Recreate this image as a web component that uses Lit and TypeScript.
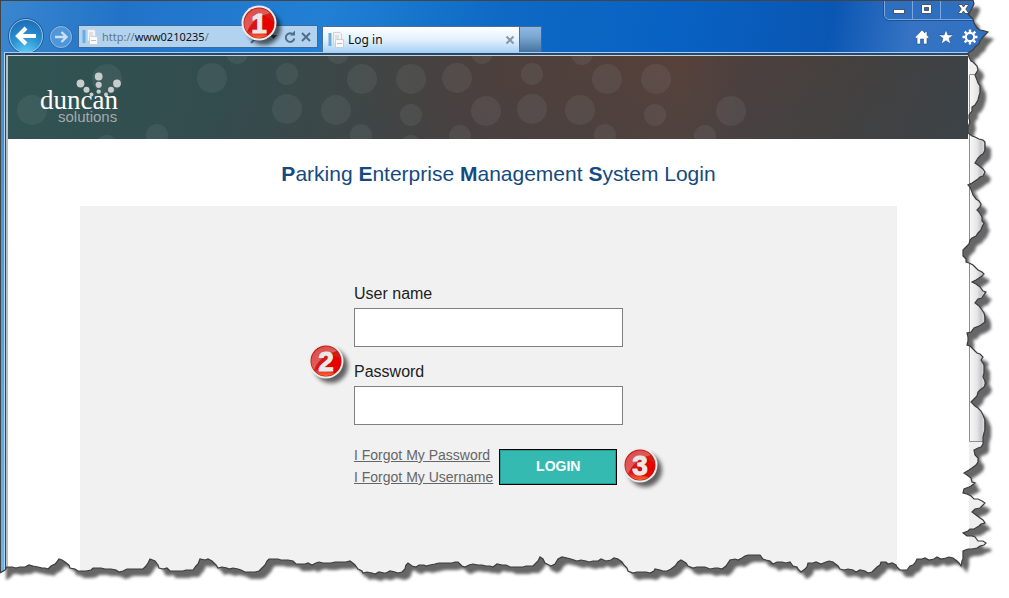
import { LitElement, html, css, svg } from "lit";
import { customElement, property } from "lit/decorators.js";

type Point = [number, number];

const RIGHT_EDGE: Point[] = [
  [973, 0], [974, 4], [972, 8], [968, 14], [971, 17], [974, 23], [980, 30], [988, 32], [983, 37], [975, 47],
  [968, 53], [969, 57], [973, 62], [978, 70], [975, 75], [978, 83], [980, 93], [978, 100], [972, 107], [969, 115],
  [968, 133], [975, 137], [985, 142], [985, 150], [978, 158], [975, 163], [985, 172], [980, 177], [968, 185],
  [973, 195], [981, 204], [977, 210], [984, 223], [978, 233], [972, 238], [963, 250], [963, 256], [966, 262],
  [975, 267], [984, 274], [972, 282], [986, 292], [975, 303], [984, 313], [985, 322], [967, 333], [967, 345],
  [983, 357], [981, 360], [984, 365], [983, 377], [986, 383], [980, 390], [971, 402], [978, 408], [982, 413],
  [985, 423], [983, 437], [981, 447], [974, 450], [978, 462], [964, 473], [975, 483], [964, 489], [963, 493],
  [985, 503], [972, 512], [985, 523], [963, 533], [986, 543], [972, 549], [963, 551], [961, 566],
];

const BOTTOM_EDGE: Point[] = [
  [953, 558], [917, 559], [907, 570], [900, 570], [892, 563], [881, 562], [877, 567], [872, 572], [840, 569],
  [833, 562], [808, 563], [805, 569], [801, 572], [790, 562], [777, 562], [773, 564], [766, 560], [760, 555],
  [748, 555], [742, 558], [730, 560], [722, 569], [697, 567], [688, 566], [681, 560], [667, 571], [655, 569],
  [650, 573], [637, 572], [628, 571], [618, 559], [593, 561], [577, 561], [562, 557], [558, 559], [551, 566],
  [545, 563], [540, 557], [533, 566], [510, 567], [497, 564], [493, 567], [473, 564], [465, 567], [458, 562],
  [443, 563], [430, 565], [412, 566], [408, 563], [402, 572], [363, 573], [358, 569], [350, 561], [337, 562],
  [323, 563], [300, 564], [288, 560], [269, 559], [262, 568], [255, 572], [245, 572], [233, 568], [218, 568],
  [212, 561], [200, 559], [193, 570], [170, 571], [167, 568], [159, 568], [155, 561], [150, 559], [143, 569],
  [127, 569], [123, 571], [107, 569], [97, 568], [82, 571], [70, 568], [65, 562], [59, 559], [48, 569],
  [33, 566], [20, 567], [7, 567], [0, 573],
];

/** Splits long strokes of the tear into short steps that wander by a pixel. */
function roughen(points: Point[]): Point[] {
  const out: Point[] = [points[0]];
  for (let i = 1; i < points.length; i++) {
    const [ax, ay] = points[i - 1];
    const [bx, by] = points[i];
    const steps = Math.max(1, Math.round(Math.hypot(bx - ax, by - ay) / 4));
    for (let s = 1; s < steps; s++) {
      const n = (i * 7 + s * 5 + i * s) % 3;
      out.push([
        Math.round(ax + ((bx - ax) * s) / steps) + (n === 1 ? 1 : 0),
        Math.round(ay + ((by - ay) * s) / steps) + (n === 2 ? 1 : n === 0 ? -1 : 0),
      ]);
    }
    out.push([bx, by]);
  }
  return out;
}

const EDGE = roughen([...RIGHT_EDGE, ...BOTTOM_EDGE]).map((p) => p.join(" ")).join("L");
const PAPER = `M0 0L${EDGE}Z`;
const OUTSIDE = `M-1 -1H1010V599H-1ZM-1 -2L${EDGE}L-1 573Z`;

const DOTS: [number, number, number][] = [
  [107, 79, 15], [32, 110, 15], [157, 135, 11], [107, 146, 11], [237, 53, 11], [212, 78, 15], [287, 74, 11],
  [287, 109, 15], [336, 110, 15], [338, 53, 11], [362, 79, 15], [411, 79, 15], [457, 78, 15], [532, 74, 11],
  [607, 79, 15], [656, 79, 15], [482, 53, 11], [582, 54, 11], [411, 115, 11], [486, 111, 15], [532, 109, 15],
  [580, 110, 15], [655, 115, 11], [361, 135, 11], [411, 146, 11], [460, 136, 11], [605, 135, 11],
  [731, 111, 15], [705, 136, 11],
];

const LOGO_DOTS: [number, number, number][] = [
  [80.5, 83.5, 3.9], [98.7, 76.5, 3.9], [117, 83.5, 3.9], [98.7, 84.8, 3.1], [86.5, 89.8, 3], [111, 89.8, 3],
  [98.7, 91.6, 2.2], [91.5, 94.4, 2], [106, 94.4, 2],
];

const pageIcon = html`<svg class="page-icon" width="16" height="16" viewBox="0 0 16 16" aria-hidden="true">
  <rect x="0.5" y="1" width="3" height="13" fill="#6aaede" />
  <path d="M5.500 .5H12L13.500 2V12H5.500Z" fill="#f4f4f4" stroke="#cfd3d7" />
  <path d="M7 4H11M7 6H11M7 8H8" stroke="#c9ced3" />
  <path d="M8.500 7.500H15.500V15.500H7.500V8.500Z" fill="#fafafa" stroke="#cbd0d5" />
  <path d="M9 11.500H14" stroke="#b9bec4" />
</svg>`;

@customElement("step-badge")
export class StepBadge extends LitElement {
  @property() step = "1";

  static styles = css`
    :host { display: block; width: 44px; height: 44px; pointer-events: none; }
    svg { display: block; overflow: visible; }
    text { font: bold 28px "Liberation Sans", Arial, sans-serif; }
  `;

  render() {
    return html`<svg width="44" height="44" viewBox="0 0 44 44" role="img" aria-label="Step ${this.step}">
      <defs>
        <linearGradient id="red" x1="0" y1="0" x2="0" y2="1">
          <stop offset="0" stop-color="#cf1f1c" /><stop offset="0.75" stop-color="#d81510" />
          <stop offset="1" stop-color="#ff6a35" />
        </linearGradient>
        <linearGradient id="gloss" x1="0" y1="0" x2="0.6" y2="1">
          <stop offset="0" stop-color="#fff" stop-opacity="0.2" /><stop offset="1" stop-color="#fff" stop-opacity="0.34" />
        </linearGradient>
        <filter id="soft" x="-30%" y="-30%" width="170%" height="170%"><feGaussianBlur stdDeviation="2" /></filter>
      </defs>
      <circle cx="23" cy="23" r="17" fill="#000" opacity="0.6" filter="url(#soft)" />
      <circle cx="18" cy="18" r="17.500" fill="#eceeee" />
      <circle cx="18" cy="18" r="15.500" fill="#b3201c" />
      <circle cx="18" cy="18" r="15" fill="url(#red)" />
      <path d="M3.500 21A15 15 0 0 1 29 8Q12 12 6 27A15 15 0 0 1 3.500 21Z" fill="url(#gloss)" />
      <path d="M22 10L33 17A15 15 0 0 1 27 30L14 27Z" fill="#e60000" />
      <text x="18" y="28" text-anchor="middle" fill="#e9e9e9" stroke="#e9e9e9" stroke-width="1">${this.step}</text>
    </svg>`;
  }
}

@customElement("browser-chrome")
export class BrowserChrome extends LitElement {
  static styles = css`
    :host {
      display: block; position: relative; overflow: hidden; height: 52px; box-sizing: border-box;
      border-top: 1px solid #444; border-left: 1px solid #444;
      background: linear-gradient(100deg, #3a87cf 0%, #2273c8 12%, #2180d4 32%, #0d69c4 50%, #0862c3 66%, #0a56b3 82%, #3673c3 90%, #2f6fc0 100%);
      font: 12px/20px "Noto Sans", "Open Sans", sans-serif; color: #111;
    }
    button { padding: 0; margin: 0; border: 0; background: none; color: inherit; font: inherit; display: block; }
    svg { display: block; }
    .title { display: flex; justify-content: flex-end; height: 19px; }
    .controls {
      display: flex; box-sizing: border-box; width: 125px; height: 19px; border: 1px solid #79a9dc; border-top: 0;
      border-radius: 0 0 0 5px; outline: 1px solid #1e5197; background: #2f6fbf;
    }
    .controls button { width: 28px; border-right: 1px solid #79a9dc; box-sizing: border-box; }
    .controls .close { width: 45px; border: 0; }
    .nav { display: flex; align-items: flex-end; height: 32px; padding: 0 31px 0 7px; }
    .back { flex: none; height: 36px; margin-bottom: -2px; }
    .forward { flex: none; height: 24px; margin: 0 5px 3px; }
    .address {
      flex: 0 1 240px; min-width: 0; box-sizing: border-box; height: 23px; margin-bottom: 4px; padding: 0 3px;
      display: flex; align-items: center; gap: 4px; border: 1px solid #3f6b98; background: #b2d3f0;
    }
    .url { position: relative; flex: 1; min-width: 0; height: 20px; font-size: 11px; }
    .url input {
      width: 100%; height: 20px; padding: 0; border: 0; outline: 0; background: none; color: transparent; font: inherit;
      display: block;
    }
    .shown { position: absolute; inset: 0; color: #667684; pointer-events: none; }
    .shown b { font-weight: 400; color: #111; }
    .page-icon { flex: none; }
    .tab {
      flex: 0 1 198px; min-width: 0; box-sizing: border-box; height: 26px; margin-left: 4px; padding: 0 4px 0 5px;
      display: flex; align-items: center; gap: 4px; border: 1px solid #4b6f95; border-bottom: 0;
      background: linear-gradient(#fff, #e3f1fd 50%, #a9d2f6);
    }
    .tab span { flex: 1; }
    .new-tab {
      flex: none; width: 22px; height: 26px; border: 1px solid #46688c; border-left: 0; border-bottom: 0;
      box-sizing: border-box; background: linear-gradient(#8db8e4, #7aa7d2 40%, #44739f);
    }
    .tools { display: flex; gap: 8px; margin: 0 0 7px auto; }
    step-badge { position: absolute; left: 240px; top: 4px; }
  `;

  render() {
    return html`
      <div class="title">
        <div class="controls">
          <button aria-label="Minimize"><svg width="27" height="18" viewBox="0 0 27 18"><rect x="8.500" y="8.500" width="11" height="4" fill="#fff" stroke="#4b5566" /></svg></button>
          <button aria-label="Maximize"><svg width="27" height="18" viewBox="0 0 27 18"><path d="M8.500 3.500H18.500V12.500H8.500ZM11.500 6.500V9.500H15.500V6.500Z" fill="#fff" fill-rule="evenodd" stroke="#4b5566" /></svg></button>
          <button class="close" aria-label="Close"><svg width="45" height="18" viewBox="0 0 45 18"><path d="M17 3.500H21L22.500 6L24 3.500H28L24.800 8L28 12.500H24L22.500 10L21 12.500H17L20.200 8Z" fill="#fff" stroke="#4b5566" /></svg></button>
        </div>
      </div>
      <div class="nav">
        <button class="back" aria-label="Back">
          <svg width="36" height="36" viewBox="0 0 36 36">
            <defs><radialGradient id="b" cx="0.5" cy="1" r="0.95"><stop offset="0" stop-color="#5fd0f5" /><stop offset="0.5" stop-color="#2b93d3" /><stop offset="1" stop-color="#1d6db8" /></radialGradient></defs>
            <circle cx="18" cy="18" r="17.500" fill="url(#b)" stroke="#2a568c" />
            <circle cx="18" cy="18" r="16.500" fill="none" stroke="#8fc6ea" />
            <path d="M28 18H11M18 10L10 18L18 26" fill="none" stroke="#fff" stroke-width="4" />
          </svg>
        </button>
        <button class="forward" aria-label="Forward">
          <svg width="24" height="24" viewBox="0 0 24 24">
            <circle cx="12" cy="12" r="11.500" fill="#4f96da" stroke="#2f66a5" />
            <circle cx="12" cy="12" r="10.500" fill="none" stroke="#86b9e6" />
            <path d="M6 12H17M12.500 7L17.500 12L12.500 17" fill="none" stroke="#c9e0f5" stroke-width="2.400" />
          </svg>
        </button>
        <div class="address">
          ${pageIcon}
          <div class="url">
            <input aria-label="Address" value="http://www0210235/" />
            <div class="shown" aria-hidden="true">http://<b>www0210235</b>/</div>
          </div>
          <svg width="64" height="16" viewBox="0 0 64 16" aria-hidden="true" fill="none" stroke="#4f6e8c">
            <path d="M1 14L5 10" stroke-width="2" /><circle cx="8" cy="6" r="4" stroke-width="1.500" />
            <path d="M20 6H27L23.500 10Z" fill="#34506c" stroke="none" />
            <path d="M42.500 5A4.300 4.300 0 1 0 44.300 9.500" stroke-width="2" /><path d="M40 6.500H45V1.500Z" fill="#4f6e8c" stroke="none" />
            <path d="M52 4L60 12M60 4L52 12" stroke-width="2" />
          </svg>
        </div>
        <div class="tab">
          ${pageIcon}<span>Log in</span>
          <button aria-label="Close tab"><svg width="10" height="10" viewBox="0 0 10 10"><path d="M1.500 1.500L8.500 8.500M8.500 1.500L1.500 8.500" stroke="#8797a8" stroke-width="2" /></svg></button>
        </div>
        <button class="new-tab" aria-label="New tab"></button>
        <div class="tools">
          <button aria-label="Home"><svg width="16" height="16" viewBox="0 0 16 16"><path d="M8 1L1 8.300L2.300 9.500L3 8.800V15H6.500V10H9.500V15H13V8.800L13.700 9.500L15 8.300L13 6.200V2.500H11V4.100Z" fill="#fff" stroke="#24508a" stroke-width="0.600" /></svg></button>
          <button aria-label="Favorites"><svg width="16" height="16" viewBox="0 0 16 16"><path d="M8 .5L9.900 5.900H15.600L11.100 9.300L12.700 15L8 11.700L3.300 15L4.900 9.300L.4 5.900H6.100Z" fill="#fff" stroke="#24508a" stroke-width="0.600" /></svg></button>
          <button aria-label="Tools"><svg width="16" height="16" viewBox="0 0 16 16"><circle cx="8" cy="8" r="4.200" fill="none" stroke="#fff" stroke-width="2.200" /><path d="M8 .5V3M8 13V15.500M.5 8H3M13 8H15.500M2.700 2.700L4.500 4.500M11.500 11.500L13.300 13.300M13.300 2.700L11.500 4.500M2.700 13.300L4.500 11.500" stroke="#fff" stroke-width="2.400" /></svg></button>
        </div>
      </div>
      <step-badge step="1"></step-badge>
    `;
  }
}

@customElement("brand-banner")
export class BrandBanner extends LitElement {
  static styles = css`
    :host {
      display: block; height: 83px; overflow: hidden; margin-right: 1px;
      background: linear-gradient(175deg, #0000 40%, #3a444c55), linear-gradient(90deg, #305453 0%, #334c4e 22%, #3e4646 36%, #4b403e 48%, #53403b 64%, #57423b 70%, #4d403e 76%, #46403d 86%, #3d4245 100%);
    }
    svg { display: block; }
    .name { font: 27px "Liberation Serif", serif; }
    .sub { font: 15px "Liberation Sans", sans-serif; }
  `;

  render() {
    return html`<svg width="800" height="83" viewBox="8 56 800 83" role="img" aria-label="duncan solutions">
      <g fill="#c9d6d6" fill-opacity="0.08">${DOTS.map(([x, y, r]) => svg`<circle cx=${x} cy=${y} r=${r} />`)}</g>
      <g fill="#c9cccc">${LOGO_DOTS.map(([x, y, r]) => svg`<circle cx=${x} cy=${y} r=${r} />`)}</g>
      <text class="name" x="40" y="109" fill="#fff">duncan</text>
      <text class="sub" x="58" y="122" fill="#a5abab">solutions</text>
    </svg>`;
  }
}

@customElement("login-form")
export class LoginForm extends LitElement {
  static styles = css`
    :host { display: block; font: 16px/20px "Liberation Sans", Arial, sans-serif; color: #222; }
    form { position: relative; width: 269px; margin: 0 auto; display: flex; flex-direction: column; gap: 15px; }
    .field { display: flex; flex-direction: column; gap: 4px; }
    .field input {
      box-sizing: border-box; width: 100%; height: 39px; padding: 0 8px; border: 1px solid #808080; border-radius: 0;
      background: #fff; font: inherit;
    }
    .actions { display: flex; gap: 6px; margin-top: 9px; white-space: nowrap; }
    .links { display: flex; flex-direction: column; font-size: 14px; line-height: 22px; margin-top: -5px; }
    a { color: #666; text-decoration: underline; }
    button {
      width: 118px; height: 36px; padding: 0 0 2px; border: 1px solid #000; border-radius: 0; background: #35bab2;
      box-shadow: inset 0 0 0 1px #1f9d96; color: #fff; font: bold 14px/20px "Liberation Sans", Arial, sans-serif;
    }
    .two, .three { position: absolute; }
    .two { left: -46px; top: 59px; }
    .three { left: 268px; top: 163px; }
  `;

  render() {
    return html`<form @submit=${(e: Event) => e.preventDefault()}>
      <div class="field"><label for="user">User name</label><input id="user" type="text" /></div>
      <div class="field"><label for="pass">Password</label><input id="pass" type="password" /></div>
      <div class="actions">
        <div class="links"><a href="#password">I Forgot My Password</a><a href="#username">I Forgot My Username</a></div>
        <button type="submit">LOGIN</button>
      </div>
      <step-badge class="two" step="2"></step-badge>
      <step-badge class="three" step="3"></step-badge>
    </form>`;
  }
}

@customElement("app-root")
export class AppRoot extends LitElement {
  static styles = css`
    :host { display: block; position: relative; min-height: 100vh; overflow: hidden; background: #fff; }
    .window { display: flex; flex-direction: column; min-height: 100vh; }
    .frame {
      flex: 1; display: flex; padding-right: 24px; border-left: 1px solid #444;
      background: linear-gradient(#3d8bd3, #55a8e2 60%, #69b9ea);
    }
    .inner {
      flex: 1; min-width: 0; display: flex; margin-left: 3px; border-top: 1px solid #a9cdf0;
      border-left: 1px solid #a9d4f2;
    }
    .rim { flex: 1; min-width: 0; display: flex; border-top: 2px solid #24496e; border-left: 1px solid #24496e; }
    .view { flex: 1; min-width: 0; display: flex; border-top: 1px solid #d0d0d0; border-left: 2px solid #b9bcc0; }
    main { flex: 1; min-width: 0; display: flex; flex-direction: column; background: #fff; }
    h1 {
      margin: 0; padding: 20px 0 18px 20px; text-align: center; color: #154a80;
      font: 21px/29px "Liberation Sans", Arial, sans-serif;
    }
    .panel { flex: 1; width: 85%; margin: 0 auto; padding: 78px 0; box-sizing: border-box; background: #f1f1f1; }
    .scroll { flex: none; width: 17px; padding-top: 18px; background: #efefef; }
    .thumb {
      height: 366px; border: 1px solid #8e8e8e; border-radius: 1px;
      background: linear-gradient(90deg, #f7f7f7, #e6e6e8 50%, #c5c5ca 80%, #dcdce0);
    }
    .view .scroll { width: 16px; }
    .tear { position: absolute; inset: 0; width: 100%; height: 100%; pointer-events: none; }
  `;

  render() {
    return html`
      <div class="window">
        <browser-chrome></browser-chrome>
        <div class="frame"><div class="inner"><div class="rim"><div class="view">
          <main>
            <brand-banner></brand-banner>
            <h1><b>P</b>arking <b>E</b>nterprise <b>M</b>anagement <b>S</b>ystem Login</h1>
            <div class="panel"><login-form></login-form></div>
          </main>
          <div class="scroll"><div class="thumb"></div></div>
        </div></div></div></div>
      </div>
      <svg class="tear" viewBox="0 0 1009 598" preserveAspectRatio="none" aria-hidden="true">
        <defs>
          <clipPath id="outside"><path d=${OUTSIDE} clip-rule="evenodd" /></clipPath>
          <filter id="blur" x="-5%" y="-5%" width="110%" height="110%"><feGaussianBlur stdDeviation="1.500" /></filter>
        </defs>
        <path d=${OUTSIDE} fill="#fff" fill-rule="evenodd" />
        <g clip-path="url(#outside)">
          <path d=${PAPER} transform="translate(6 7)" fill="#666" filter="url(#blur)" />
        </g>
        <path d="M${EDGE}" fill="none" stroke="#3c3c3c" stroke-width="1.200" />
      </svg>
    `;
  }
}
